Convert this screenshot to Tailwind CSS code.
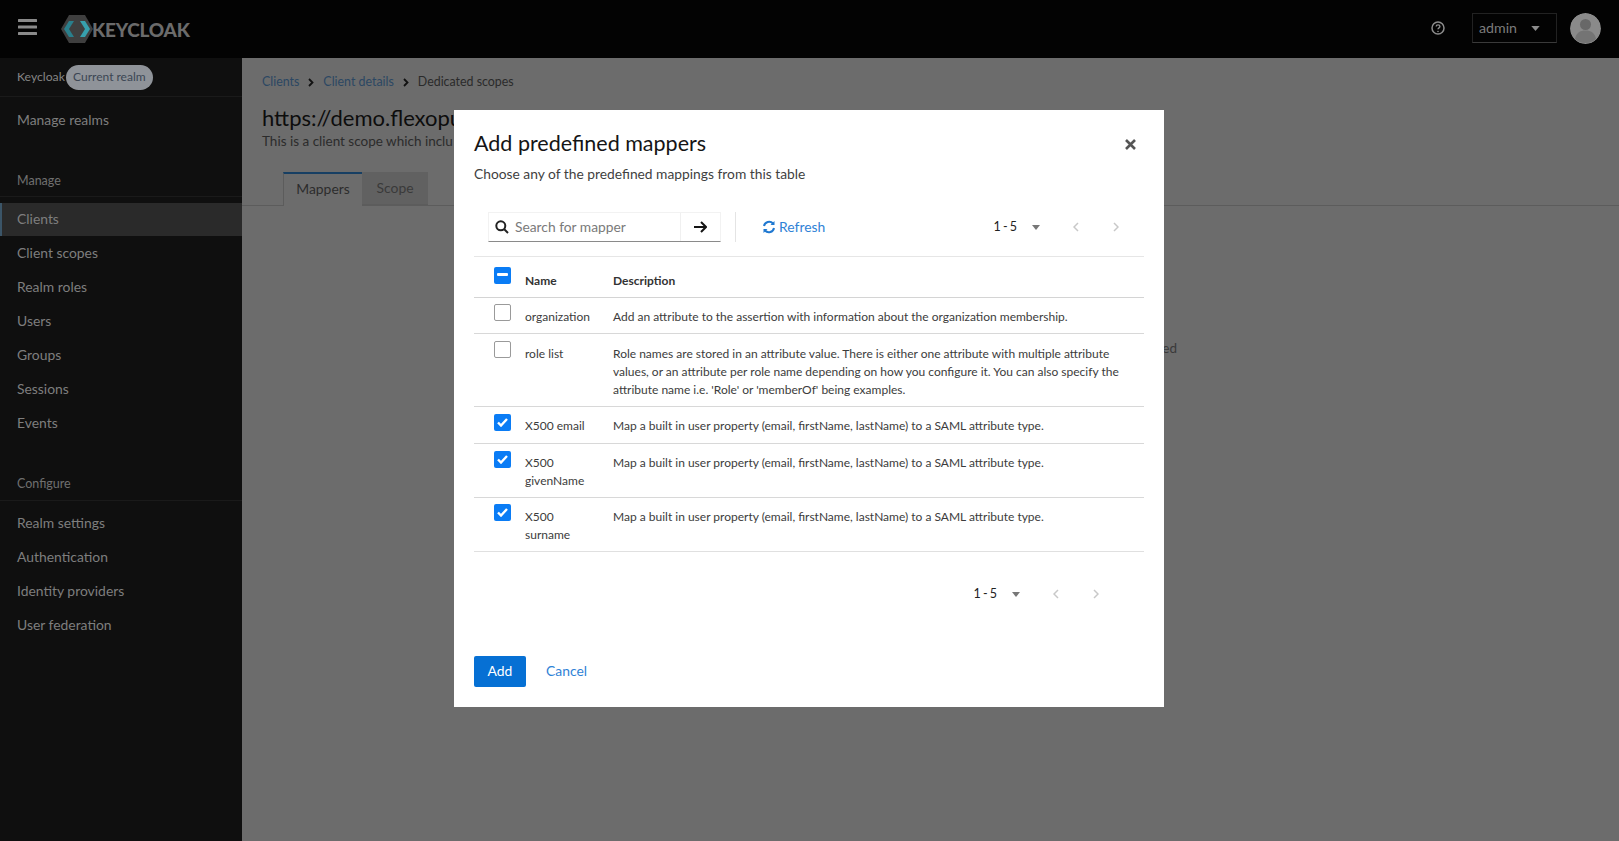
<!DOCTYPE html>
<html lang="en">
<head>
  <meta charset="UTF-8" />
  <title>Keycloak</title>
  <script src="https://cdn.jsdelivr.net/npm/@tailwindcss/browser@4"></script>
</head>
<body class="bg-[#6a6a6a] font-['Lato','Liberation_Sans',sans-serif]">
<div class="relative w-[1619px] h-[841px] overflow-hidden flex flex-col">

  <!-- Header -->
  <header class="h-[58px] shrink-0 bg-[#030303] flex items-center pl-[18px] pr-[18px]">
    <svg class="w-[19px] h-[16px] mb-[4px]" viewBox="0 0 19 16" fill="#8a8a8a"><rect width="19" height="3" rx="0.5"/><rect y="6.5" width="19" height="3" rx="0.5"/><rect y="13" width="19" height="3" rx="0.5"/></svg>
    <div class="flex items-center ml-[24px]">
      <svg class="w-[32px] h-[28px]" viewBox="0 0 32 28">
        <path d="M8 0h16l8 14-8 14H8L0 14z" fill="#3f3f3f"/>
        <path d="M3 14l5-8h5l-5 8 5 8H8z" fill="#2a7f8c"/>
        <path d="M29 14l-5-8h-5l5 8-5 8h5z" fill="#37a0ad"/>
      </svg>
      <span class="text-[19px] leading-none font-black text-[#6b6b6b] tracking-[-0.2px] -ml-[1px]">KEYCLOAK</span>
    </div>
    <div class="ml-auto flex items-center pb-[2px]">
      <svg class="w-[14px] h-[14px] mr-[27px] mb-[1px]" viewBox="0 0 14 14" fill="none" stroke="#8c8c8c" stroke-width="1.5"><circle cx="7" cy="7" r="6"/><path d="M5.2 5.5c0-2.2 3.7-2.2 3.7 0 0 1.4-1.9 1.3-1.9 2.8" stroke-width="1.4"/><circle cx="7" cy="10.4" r="0.5" fill="#8c8c8c" stroke-width="0.6"/></svg>
      <div class="w-[85px] h-[30px] border border-[#222] border-b-[#3a3a3a] flex items-center pl-[6px] text-[14.2px] text-[#7c7c7c]">
        admin
        <svg class="w-[9px] h-[5px] ml-[14px]" viewBox="0 0 10 6" fill="#8c8c8c"><path d="M0 0h10L5 6z"/></svg>
      </div>
      <svg class="w-[31px] h-[31px] ml-[13px] rounded-full" viewBox="0 0 31 31"><circle cx="15.5" cy="15.5" r="15.5" fill="#8a8a8a"/><circle cx="15.5" cy="11.5" r="5.5" fill="#686868"/><path d="M5 26c1-6 5-8.500 10.500-8.500S25 20 26 26a15.500 15.500 0 0 1-21 0z" fill="#747474"/></svg>
    </div>
  </header>

  <div class="flex flex-1 min-h-0">
    <!-- Sidebar -->
    <aside class="w-[242px] shrink-0 bg-[#0f0f0f] text-[#7e7e7e] text-[13.9px]">
      <div class="h-[39px] border-b border-[#1a1a1a] flex items-center pl-[17px] text-[12.2px] text-[#858585]">
        Keycloak
        <span class="ml-[1px] h-[25px] w-[87px] rounded-full bg-[#8f9399] text-[#3b4654] flex items-center justify-center text-[12px]">Current realm</span>
      </div>
      <div class="h-[48px] pb-[2px] flex items-center pl-[17px]">Manage realms</div>
      <div class="mt-[21px] h-[31px] flex items-center pl-[17px] text-[12.5px] text-[#6f6f6f] border-b border-[#1a1a1a]">Manage</div>
      <nav class="mt-[6px]">
        <div class="h-[33px] flex items-center pl-[15px] bg-[#2a2a2a] border-l-2 border-[#3b5568]">Clients</div>
        <div class="h-[34px] flex items-center pl-[17px]">Client scopes</div>
        <div class="h-[34px] flex items-center pl-[17px]">Realm roles</div>
        <div class="h-[34px] flex items-center pl-[17px]">Users</div>
        <div class="h-[34px] flex items-center pl-[17px]">Groups</div>
        <div class="h-[34px] flex items-center pl-[17px]">Sessions</div>
        <div class="h-[34px] flex items-center pl-[17px]">Events</div>
      </nav>
      <div class="mt-[28px] h-[33px] flex items-center pl-[17px] text-[12.5px] text-[#6f6f6f] border-b border-[#1a1a1a]">Configure</div>
      <nav class="mt-[5px]">
        <div class="h-[34px] flex items-center pl-[17px]">Realm settings</div>
        <div class="h-[34px] flex items-center pl-[17px]">Authentication</div>
        <div class="h-[34px] flex items-center pl-[17px]">Identity providers</div>
        <div class="h-[34px] flex items-center pl-[17px]">User federation</div>
      </nav>
    </aside>

    <!-- Main behind the dialog -->
    <main class="flex-1 min-w-0 bg-[#6c6c6c]">
      <div class="pl-[20px] pt-[16px] flex items-center h-[32px] text-[12.4px] text-[#2a2a2a]">
        <span class="text-[#2b4763]">Clients</span>
        <svg class="w-[6px] h-[9px] mx-[9px]" viewBox="0 0 6 9" fill="none" stroke="#111" stroke-width="1.8"><path d="M1 1l3.500 3.500L1 8"/></svg>
        <span class="text-[#2b4763]">Client details</span>
        <svg class="w-[6px] h-[9px] mx-[9px]" viewBox="0 0 6 9" fill="none" stroke="#111" stroke-width="1.8"><path d="M1 1l3.500 3.500L1 8"/></svg>
        <span>Dedicated scopes</span>
      </div>
      <h1 class="pl-[20px] mt-[13px] text-[22px] leading-[29px] text-[#0d0d0d] whitespace-nowrap">https://demo.flexopu</h1>
      <p class="pl-[20px] text-[13.5px] leading-[18px] text-[#2b2b2b] whitespace-nowrap">This is a client scope which inclu</p>
      <div class="mt-[22px] h-[34px] pl-[41px] flex border-b border-[#5c5c5c] text-[13.9px]">
        <div class="w-[79px] h-[34px] pb-[2px] bg-[#6c6c6c] border-t-2 border-[#173f63] border-l border-l-[#5c5c5c] flex items-center justify-center text-[#2c2c2c]">Mappers</div>
        <div class="w-[66px] h-[33px] bg-[#616161] border-b border-[#5c5c5c] flex items-center justify-center text-[#3a3a3a]">Scope</div>
      </div>
      <div class="mt-[132px] pr-[442px] text-right text-[13.5px] text-[#3a3a3a]">ed</div>
    </main>
  </div>

  <!-- Dialog -->
  <div class="absolute left-[454px] top-[110px] w-[710px] h-[597px] bg-white flex flex-col px-[20px] text-[#3c3c3c]">
    <h2 class="mt-[19px] text-[21.5px] leading-[28px] text-[#151515]">Add predefined mappers</h2>
    <p class="mt-[7px] text-[13.8px] leading-[20px] text-[#3f3f3f]">Choose any of the predefined mappings from this table</p>
    <button class="absolute right-[28px] top-[29px]" aria-label="Close">
      <svg class="w-[11px] h-[11px]" viewBox="0 0 11 11" stroke="#555" stroke-width="2.600"><path d="M1 1l9 9M10 1l-9 9"/></svg>
    </button>

    <!-- Toolbar -->
    <div class="mt-[28px] h-[30px] flex items-center pl-[14px]">
      <div class="w-[233px] h-[30px] flex border border-[#f2f2f2] border-b-[#8a8a8a]">
        <div class="flex-1 flex items-center pl-[6px] text-[13.8px] text-[#7a7a7a]">
          <svg class="w-[14px] h-[14px] mr-[6px]" viewBox="0 0 14 14" fill="none" stroke="#222" stroke-width="2"><circle cx="5.800" cy="5.800" r="4.500"/><path d="M9 9l4 4"/></svg>
          Search for mapper
        </div>
        <div class="w-[40px] border-l border-[#f0f0f0] flex items-center justify-center">
          <svg class="w-[13px] h-[12px]" viewBox="0 0 13 12" fill="none" stroke="#151515" stroke-width="2"><path d="M0 6h11M7 1l5 5-5 5"/></svg>
        </div>
      </div>
      <div class="ml-[14px] w-[1px] h-[30px] bg-[#e4e4e4]"></div>
      <div class="ml-[26px] flex items-center text-[13.9px] text-[#2f82d6]">
        <svg class="w-[14px] h-[14px] mr-[3px]" viewBox="0 0 14 14" fill="none" stroke="#1f78d1" stroke-width="2"><path d="M2 6a5.200 5.200 0 0 1 9-2.500"/><path d="M12 8a5.200 5.200 0 0 1-9 2.500"/><path d="M12.500 1v4h-4z" fill="#1f78d1" stroke="none"/><path d="M1.500 13V9h4z" fill="#1f78d1" stroke="none"/></svg>
        Refresh
      </div>
      <div class="ml-auto mr-[25px] flex items-center text-[12.5px] text-[#222]">
        <span class="[word-spacing:-1px]">1 - 5</span>
        <svg class="ml-[15px] w-[8px] h-[5px]" viewBox="0 0 10 6" fill="#777"><path d="M0 0h10L5 6z"/></svg>
        <svg class="ml-[33px] w-[6px] h-[10px]" viewBox="0 0 6 10" fill="none" stroke="#c8c8c8" stroke-width="1.500"><path d="M5 1L1 5l4 4"/></svg>
        <svg class="ml-[34px] w-[6px] h-[10px]" viewBox="0 0 6 10" fill="none" stroke="#c8c8c8" stroke-width="1.500"><path d="M1 1l4 4-4 4"/></svg>
      </div>
    </div>

    <!-- Table -->
    <table class="mt-[14px] w-[670px] table-fixed text-[12px] leading-[18px] border-t border-[#e6e6e6]">
      <colgroup><col class="w-[51px]" /><col class="w-[88px]" /><col /></colgroup>
      <thead>
        <tr class="h-[41px] border-b border-[#d4d4d4] text-[#333] text-left">
          <th class="align-top pl-[20px] pt-[10px]">
            <span class="w-[17px] h-[17px] rounded-[2px] bg-[#0a7cf5] flex items-center justify-center"><span class="w-[11px] h-[3px] bg-white rounded-[1px] -mt-[2px]"></span></span>
          </th>
          <th class="align-top pt-[15px] font-bold">Name</th>
          <th class="align-top pt-[15px] font-bold">Description</th>
        </tr>
      </thead>
      <tbody>
        <tr class="h-[36px] border-b border-[#d8d8d8]">
          <td class="align-top pl-[20px] pt-[6px]"><span class="block w-[17px] h-[17px] rounded-[2px] border border-[#9a9a9a]"></span></td>
          <td class="align-top pt-[10px]">organization</td>
          <td class="align-top pt-[10px]">Add an attribute to the assertion with information about the organization membership.</td>
        </tr>
        <tr class="h-[73px] border-b border-[#d8d8d8]">
          <td class="align-top pl-[20px] pt-[7px]"><span class="block w-[17px] h-[17px] rounded-[2px] border border-[#9a9a9a]"></span></td>
          <td class="align-top pt-[11px]">role list</td>
          <td class="align-top pt-[11px]">Role names are stored in an attribute value. There is either one attribute with multiple attribute<br />values, or an attribute per role name depending on how you configure it. You can also specify the<br />attribute name i.e. 'Role' or 'memberOf' being examples.</td>
        </tr>
        <tr class="h-[37px] border-b border-[#d8d8d8]">
          <td class="align-top pl-[20px] pt-[7px]"><span class="w-[17px] h-[17px] rounded-[2px] bg-[#0a7cf5] flex items-center justify-center"><svg class="w-[11px] h-[9px]" viewBox="0 0 11 9" fill="none" stroke="#fff" stroke-width="2.400"><path d="M1 4.500l3 3 6-6.500"/></svg></span></td>
          <td class="align-top pt-[10px]">X500 email</td>
          <td class="align-top pt-[10px]">Map a built in user property (email, firstName, lastName) to a SAML attribute type.</td>
        </tr>
        <tr class="h-[54px] border-b border-[#d8d8d8]">
          <td class="align-top pl-[20px] pt-[7px]"><span class="w-[17px] h-[17px] rounded-[2px] bg-[#0a7cf5] flex items-center justify-center"><svg class="w-[11px] h-[9px]" viewBox="0 0 11 9" fill="none" stroke="#fff" stroke-width="2.400"><path d="M1 4.500l3 3 6-6.500"/></svg></span></td>
          <td class="align-top pt-[10px]">X500<br />givenName</td>
          <td class="align-top pt-[10px]">Map a built in user property (email, firstName, lastName) to a SAML attribute type.</td>
        </tr>
        <tr class="h-[54px] border-b border-[#e0e0e0]">
          <td class="align-top pl-[20px] pt-[6px]"><span class="w-[17px] h-[17px] rounded-[2px] bg-[#0a7cf5] flex items-center justify-center"><svg class="w-[11px] h-[9px]" viewBox="0 0 11 9" fill="none" stroke="#fff" stroke-width="2.400"><path d="M1 4.500l3 3 6-6.500"/></svg></span></td>
          <td class="align-top pt-[10px]">X500<br />surname</td>
          <td class="align-top pt-[10px]">Map a built in user property (email, firstName, lastName) to a SAML attribute type.</td>
        </tr>
      </tbody>
    </table>

    <!-- Bottom pagination -->
    <div class="mt-[32px] h-[20px] flex items-center justify-end pr-[45px] text-[12.5px] text-[#222]">
      <span class="[word-spacing:-1px]">1 - 5</span>
      <svg class="ml-[15px] w-[8px] h-[5px]" viewBox="0 0 10 6" fill="#777"><path d="M0 0h10L5 6z"/></svg>
      <svg class="ml-[33px] w-[6px] h-[10px]" viewBox="0 0 6 10" fill="none" stroke="#c8c8c8" stroke-width="1.500"><path d="M5 1L1 5l4 4"/></svg>
      <svg class="ml-[34px] w-[6px] h-[10px]" viewBox="0 0 6 10" fill="none" stroke="#c8c8c8" stroke-width="1.500"><path d="M1 1l4 4-4 4"/></svg>
    </div>

    <!-- Footer -->
    <div class="mt-auto mb-[20px] flex items-center text-[13.9px]">
      <button class="w-[52px] h-[31px] rounded-[2px] bg-[#0670d4] text-white">Add</button>
      <button class="ml-[20px] text-[#2f82d6]">Cancel</button>
    </div>
  </div>
</div>
</body>
</html>
